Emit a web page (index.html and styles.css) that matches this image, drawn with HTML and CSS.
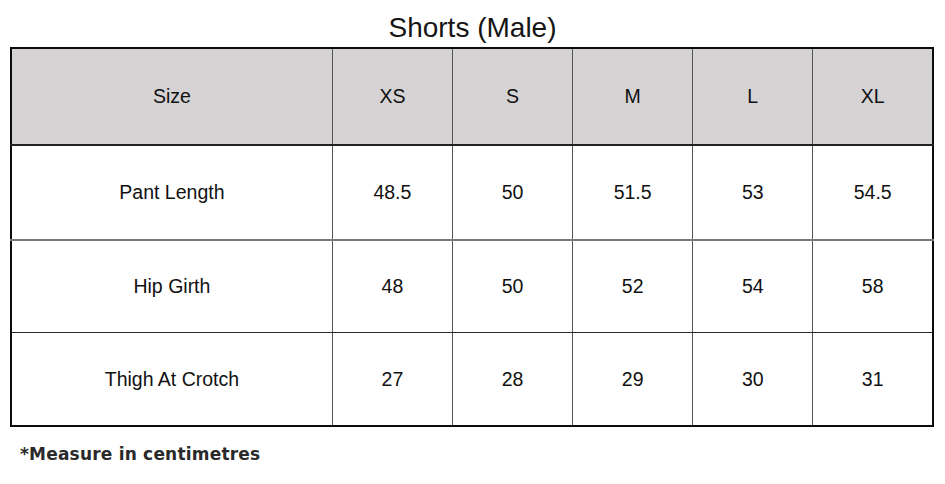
FILE: index.html
```html
<!DOCTYPE html>
<html>
<head>
<meta charset="utf-8">
<link rel="stylesheet" href="styles.css">
</head>
<body>
<div class="page">
  <h1 class="title">Shorts (Male)</h1>
  <table class="chart">
    <colgroup>
      <col class="c-label"><col class="c-size"><col class="c-size"><col class="c-size"><col class="c-size"><col class="c-size">
    </colgroup>
    <thead>
      <tr class="head"><th>Size</th><th>XS</th><th>S</th><th>M</th><th>L</th><th>XL</th></tr>
    </thead>
    <tbody>
      <tr class="r1"><td>Pant Length</td><td>48.5</td><td>50</td><td>51.5</td><td>53</td><td>54.5</td></tr>
      <tr class="r2"><td>Hip Girth</td><td>48</td><td>50</td><td>52</td><td>54</td><td>58</td></tr>
      <tr class="r3"><td>Thigh At Crotch</td><td>27</td><td>28</td><td>29</td><td>30</td><td>31</td></tr>
    </tbody>
  </table>
  <p class="note">*Measure in centimetres</p>
</div>
</body>
</html>
```
FILE: styles.css
```css
html, body {
  margin: 0;
  padding: 0;
  background: #ffffff;
}
.page {
  width: 945px;
  height: 484px;
  font-family: "Liberation Sans", Arial, sans-serif;
  color: #111;
}
.title {
  margin: 0;
  height: 47px;
  box-sizing: border-box;
  padding-top: 12px;
  text-align: center;
  font-weight: normal;
  font-size: 28px;
  line-height: 32px;
  color: #151515;
}
.chart {
  margin-left: 10px;
  width: 924px;
  border-collapse: collapse;
  table-layout: fixed;
  border: 2px solid #0c0c0c;
}
.c-label { width: 321px; }
.c-size { width: 120px; }
.chart th, .chart td {
  text-align: center;
  vertical-align: middle;
  font-size: 19.5px;
  font-weight: normal;
  padding: 0;
  border-left: 1px solid #555;
  border-right: 1px solid #555;
}
.head th {
  background: #d5d3d3;
  height: 95px;
  border-bottom: 2px solid #222;
}
.r1 td { height: 93px; border-bottom: 2px solid #7a7a7a; }
.r2 td { height: 91px; border-bottom: 1px solid #2a2a2a; }
.r3 td { height: 92px; }
.note {
  margin: 17px 0 0 20px;
  font-family: "DejaVu Sans", sans-serif;
  font-weight: bold;
  font-size: 17px;
  color: #2a2a2a;
  letter-spacing: 0.2px;
}
```
